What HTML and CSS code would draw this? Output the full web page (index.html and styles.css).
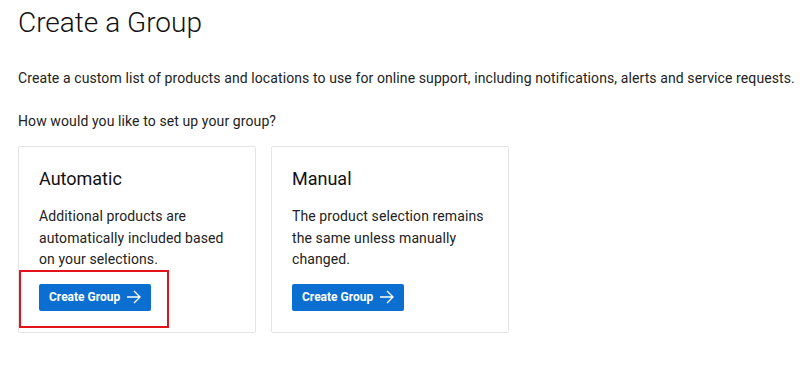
FILE: index.html
```html
<!DOCTYPE html>
<html>
<head>
<title>Create a Group</title>
<link rel="stylesheet" href="styles.css">
</head>
<body>
	<h1 class="title">Create a Group</h1>
	<p class="intro">Create a custom list of products and locations to use for online support, including notifications, alerts and service requests.</p>
	<p class="question">How would you like to set up your group?</p>

	<div class="cards">
		<div class="card">
			<h2>Automatic</h2>
			<p>Additional products are automatically included based on your selections.</p>
			<div class="action">
				<button class="btn">Create Group
					<svg width="16" height="14" viewBox="0 0 16 14"><path d="M1 7h13M8 1l6 6-6 6" fill="none" stroke="#fff" stroke-width="1.4"/></svg>
				</button>
				<span class="highlight"></span>
			</div>
		</div>
		<div class="card">
			<h2>Manual</h2>
			<p>The product selection remains the same unless manually changed.</p>
			<div class="action">
				<button class="btn">Create Group
					<svg width="16" height="14" viewBox="0 0 16 14"><path d="M1 7h13M8 1l6 6-6 6" fill="none" stroke="#fff" stroke-width="1.4"/></svg>
				</button>
			</div>
		</div>
	</div>
</body>
</html>
```

FILE: styles.css
```css
body {
	margin: 0;
	padding: 0 18px;
	font-family: Roboto, "Liberation Sans", sans-serif;
	color: #222;
	background: #fff;
	overflow: hidden;
}

.title {
	margin: 6px 0 0;
	font-size: 28px;
	font-weight: 300;
	line-height: 34px;
	color: #111;
}

.intro {
	margin: 28px 0 0;
	font-size: 14px;
	line-height: 20px;
	letter-spacing: 0.1px;
	white-space: nowrap;
}

.question {
	margin: 23px 0 0;
	font-size: 14px;
	line-height: 20px;
	letter-spacing: 0.1px;
}

.cards {
	display: flex;
	gap: 15px;
	margin-top: 15px;
}

.card {
	width: 196px;
	height: 145px;
	padding: 20px;
	border: 1px solid #e4e4e4;
	border-radius: 2px;
}

.card h2 {
	margin: 0;
	font-size: 18px;
	font-weight: 400;
	line-height: 24px;
	color: #111;
}

.card p {
	margin: 15px 0 0;
	font-size: 14px;
	line-height: 21.5px;
	letter-spacing: 0.1px;
	color: #222;
}

.action {
	position: relative;
	margin-top: 13px;
}

.btn {
	display: flex;
	align-items: center;
	gap: 6px;
	height: 27px;
	padding: 0 9px 0 10px;
	border: 0;
	border-radius: 2px;
	background: #0a6fd1;
	color: #fff;
	font-family: Roboto, "Liberation Sans", sans-serif;
	font-size: 12px;
	font-weight: 700;
}

.highlight {
	position: absolute;
	left: -20px;
	top: -14px;
	width: 146px;
	height: 54px;
	border: 2px solid #e3121b;
}
```
